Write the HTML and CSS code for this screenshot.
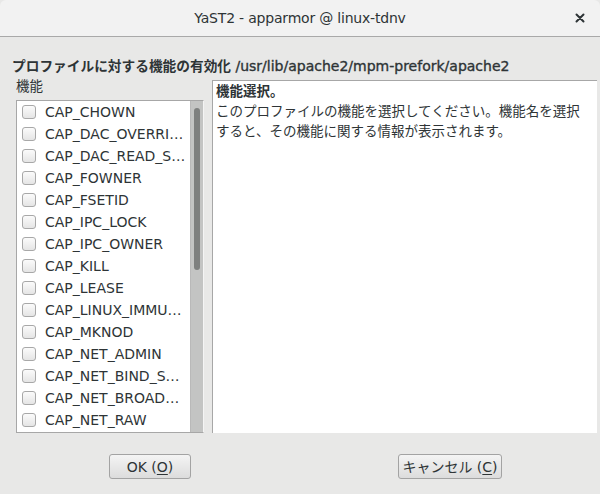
FILE: index.html
```html
<!DOCTYPE html>
<html lang="ja">
<head>
<meta charset="utf-8">
<title>YaST2 - apparmor @ linux-tdnv</title>
<link rel="stylesheet" href="styles.css">
</head>
<body>
<div class="window">
  <header class="titlebar">
    <span class="title">YaST2 - apparmor @ linux-tdnv</span>
    <span class="close"><svg width="10" height="10" viewBox="0 0 10 10"><path d="M1.5 1.5 L8.5 8.5 M8.5 1.5 L1.5 8.5" stroke="#2e3436" stroke-width="2" stroke-linecap="round"/></svg></span>
  </header>
  <main class="content">
    <h1 class="heading"><span class="heading-jp">プロファイルに対する機能の有効化</span> <span class="heading-path">/usr/lib/apache2/mpm-prefork/apache2</span></h1>
    <div class="panes">
      <div class="left">
        <div class="label">機能</div>
        <div class="listbox">
          <ul class="list">
            <li class="item"><span class="check"></span><span class="name">CAP_CHOWN</span></li>
            <li class="item"><span class="check"></span><span class="name">CAP_DAC_OVERRIDE</span></li>
            <li class="item"><span class="check"></span><span class="name">CAP_DAC_READ_SEARCH</span></li>
            <li class="item"><span class="check"></span><span class="name">CAP_FOWNER</span></li>
            <li class="item"><span class="check"></span><span class="name">CAP_FSETID</span></li>
            <li class="item"><span class="check"></span><span class="name">CAP_IPC_LOCK</span></li>
            <li class="item"><span class="check"></span><span class="name">CAP_IPC_OWNER</span></li>
            <li class="item"><span class="check"></span><span class="name">CAP_KILL</span></li>
            <li class="item"><span class="check"></span><span class="name">CAP_LEASE</span></li>
            <li class="item"><span class="check"></span><span class="name">CAP_LINUX_IMMUTABLE</span></li>
            <li class="item"><span class="check"></span><span class="name">CAP_MKNOD</span></li>
            <li class="item"><span class="check"></span><span class="name">CAP_NET_ADMIN</span></li>
            <li class="item"><span class="check"></span><span class="name">CAP_NET_BIND_SERVICE</span></li>
            <li class="item"><span class="check"></span><span class="name">CAP_NET_BROADCAST</span></li>
            <li class="item"><span class="check"></span><span class="name">CAP_NET_RAW</span></li>
            <li class="item"><span class="check"></span><span class="name">CAP_SETGID</span></li>
          </ul>
          <div class="scrollbar"><div class="thumb"></div></div>
        </div>
      </div>
      <div class="info">
        <p class="info-title">機能選択。</p>
        <p class="info-text">このプロファイルの機能を選択してください。機能名を選択すると、その機能に関する情報が表示されます。</p>
      </div>
    </div>
    <div class="buttons">
      <div class="btn-cell"><button class="btn btn-ok">OK (<u>O</u>)</button></div>
      <div class="btn-cell"><button class="btn btn-cancel">キャンセル (<u>C</u>)</button></div>
    </div>
  </main>
</div>
</body>
</html>
```

FILE: styles.css
```css
* { box-sizing: border-box; }
html, body { margin: 0; padding: 0; }
body {
  width: 600px;
  height: 494px;
  overflow: hidden;
  background: #e8e8e7;
  font-family: "DejaVu Sans", "Noto Sans CJK JP", sans-serif;
  font-size: 14px;
  color: #2e3436;
}
.window {
  width: 600px;
  height: 494px;
  display: flex;
  flex-direction: column;
  background: #e8e8e7;
}
.titlebar {
  height: 37px;
  flex: none;
  display: flex;
  align-items: center;
  justify-content: center;
  position: relative;
  background: #f2f2f2;
  border-bottom: 1px solid #a9a9a9;
  border-radius: 6px 6px 0 0;
}
.title {
  font-size: 14px;
  color: #2e3436;
  letter-spacing: -0.2px;
}
.close {
  position: absolute;
  right: 15px;
  top: 13px;
  width: 10px;
  height: 10px;
  display: flex;
}
.content {
  flex: 1;
  display: flex;
  flex-direction: column;
  padding: 20px 3px 0 12px;
}
.heading {
  margin: 0;
  font-size: 14px;
  line-height: 18px;
  font-weight: normal;
  color: #2e3436;
  white-space: nowrap;
}
.heading-jp {
  font-weight: bold;
  font-size: 13.7px;
}
.heading-path {
  font-weight: normal;
  -webkit-text-stroke: 0.35px #2e3436;
}
.panes {
  display: flex;
  margin-top: 3px;
  margin-left: 4px;
  gap: 8px;
  height: 355px;
}
.left {
  width: 188px;
  flex: none;
  display: flex;
  flex-direction: column;
}
.label {
  font-size: 13.5px;
  line-height: 17px;
  height: 22px;
  color: #2e3436;
}
.listbox {
  flex: 1;
  display: flex;
  border: 1px solid #a7a7a7;
  border-right-color: #f4f4f4;
  background: #fff;
  overflow: hidden;
}
.list {
  list-style: none;
  margin: 0;
  padding: 0 0 0 5px;
  flex: 1;
  min-width: 0;
  overflow: hidden;
}
.item {
  height: 22px;
  display: flex;
  align-items: center;
}
.check {
  width: 14px;
  height: 14px;
  flex: none;
  border: 1px solid #a8a8a8;
  border-radius: 3px;
  background: linear-gradient(#fbfbfb, #e5e5e5);
  margin-right: 9px;
}
.name {
  white-space: nowrap;
  overflow: hidden;
  text-overflow: ellipsis;
  color: #2e3436;
  padding-right: 3px;
}
.scrollbar {
  width: 13px;
  flex: none;
  background: #c3c4c3;
  border-left: 1px solid #b9b9b9;
  padding: 7px 3px 0 3px;
}
.thumb {
  width: 6px;
  height: 162px;
  border-radius: 3px;
  background: #7e807f;
}
.info {
  flex: 1;
  margin-top: 2px;
  border: 1px solid #a7a7a7;
  border-right: none;
  border-bottom: none;
  background: #fff;
  padding: 0 10px 0 3px;
  font-size: 13.5px;
  line-height: 20px;
}
.info p { margin: 0; }
.info-title { font-weight: bold; }
.info-text { color: #2e3436; }
.buttons {
  display: grid;
  grid-template-columns: 1fr 1fr;
  margin-top: 21px;
  margin-left: -12px;
  margin-right: -3px;
}
.btn-cell {
  display: flex;
  justify-content: center;
}
.btn {
  height: 25px;
  font-family: "DejaVu Sans", "Noto Sans CJK JP", sans-serif;
  font-size: 14px;
  color: #2e3436;
  background: linear-gradient(#f4f4f4, #dcdcdc);
  border: 1px solid #a3a3a3;
  border-radius: 3px;
  padding: 0;
  line-height: 22px;
}
.btn-ok { width: 82px; }
.btn-cancel { width: 104px; }
.btn u { text-underline-offset: 2px; }
```
